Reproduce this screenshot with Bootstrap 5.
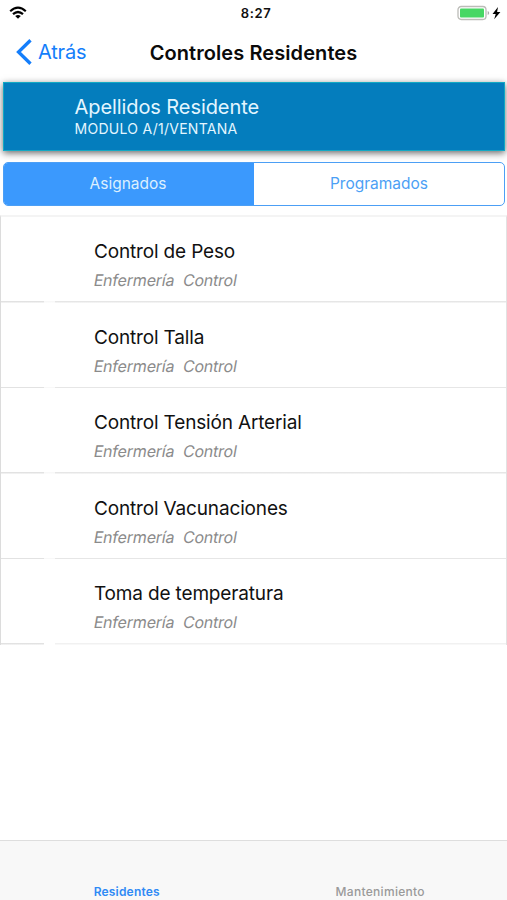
<!DOCTYPE html>
<html lang="es">
<head>
<meta charset="utf-8">
<meta name="viewport" content="width=device-width, initial-scale=1">
<title>Controles Residentes</title>
<link href="https://cdn.jsdelivr.net/npm/bootstrap@5.3.0/dist/css/bootstrap.min.css" rel="stylesheet">
<style>
body{font-family:Inter,"Liberation Sans",sans-serif;color:#111;background:#fff;height:900px;overflow:hidden}
.status-bar{height:26px;padding:0 6px 0 9px}
.side{flex:1 1 0}
.clock{font-size:13px;font-weight:600;line-height:26px;letter-spacing:.6px;padding-left:2px}
.nav-top{height:54px;padding:0 16px 1px}
.back-link{color:#147efb;font-size:20px;letter-spacing:-.2px;gap:5px;margin-top:2px}
.page-title{font-size:20px;font-weight:600;line-height:52px;letter-spacing:.08px;color:#0a0a0a}
.resident{height:69px;margin:2px 2px 0 3px;padding:11px 0 0 70.5px;background:#047dbd;border:1.5px solid #12a9c4;color:#e3f6ff;box-shadow:0 2px 7px 0 rgba(0,0,0,.6)}
.resident-name{font-size:20px;line-height:26px;letter-spacing:-.08px}
.resident-room{font-size:14px;line-height:18px;letter-spacing:.27px}
.segments{height:44px;margin:11px 2px 0 3px;border:1px solid #4c9ff5;border-radius:5px;overflow:hidden}
.segments .btn{border:0;border-radius:0;font-size:15.5px;padding:1px 0;color:#4c9ff5;line-height:40px}
.segments .btn.active{background:#3b99fd;color:#dcefff;padding-right:2px}
.controls{margin-top:9px;border-left:1.5px solid #dcdcdc;border-right:1px solid #e2e2e2;border-top:2px solid #f4f4f4}
.controls .list-group-item{height:85.5px;padding:22px 0 0 93px;border:0;color:#111;background:linear-gradient(90deg,#e2e2e2 43px,#f8f8f8 43px 54px,#e6e6e6 54px) 0 100%/100% 1.5px no-repeat #fff}
.controls .list-group-item:last-child{background:linear-gradient(90deg,#e2e2e2 43px,#fff 43px 54px,#f1f1f1 54px) 0 100%/100% 1.5px no-repeat #fff}
.control-name{font-size:19px;line-height:25px;letter-spacing:-.16px}
.control-kind{width:max-content;font-size:16px;line-height:20px;margin-top:6px;color:#8b8b8b;white-space:pre;letter-spacing:-.2px;transform:skewX(-10deg)}
.tabs{height:60px;background:#f8f8f8;border-top:1px solid #dedede;font-size:12px;font-weight:500;padding-top:42px;line-height:18px;color:#9a9a9a;letter-spacing:.3px}
.tabs .current{color:#2f8af5;font-weight:600;letter-spacing:.2px}
</style>
</head>
<body class="d-flex flex-column">
<div class="status-bar d-flex align-items-center">
  <div class="side d-flex">
    <svg width="18" height="14" viewBox="0 0 18 14" fill="none" stroke="#000" stroke-width="2.2"><path d="M1.2 5.2Q9-1.8 16.8 5.2M4 8.2Q9 3.8 14 8.2"/><path d="M9 12.8L6.2 10Q9 7.8 11.8 10Z" fill="#000" stroke="none"/></svg>
  </div>
  <div class="clock">8:27</div>
  <div class="side d-flex justify-content-end">
    <svg width="44" height="16" viewBox="0 0 44 16"><rect x="1" y="1.5" width="28" height="13" rx="3.2" fill="#fff" stroke="#bcbcb8" stroke-width="1.3"/><rect x="3" y="3.5" width="24" height="9" rx="1" fill="#47d764"/><path d="M30.7 6v4q1.5-.5 1.5-2t-1.5-2z" fill="#aaa"/><path d="M41 2L35.5 9h3.2l-1.5 5.2L43.4 7h-3.3z"/></svg>
  </div>
</div>
<nav class="nav-top d-flex align-items-center">
  <div class="side"><a class="back-link d-inline-flex align-items-center text-decoration-none" href="#"><svg width="17" height="26" viewBox="0 0 17 26" fill="none" stroke="#147efb" stroke-width="3.3"><path d="M14.5 1.2L2.5 13l12 11.8"/></svg>Atrás</a></div>
  <div class="page-title">Controles Residentes</div>
  <div class="side"></div>
</nav>
<header class="resident">
  <div class="resident-name">Apellidos Residente</div>
  <div class="resident-room">MODULO A/1/VENTANA</div>
</header>
<div class="segments d-flex">
  <button class="btn active w-50">Asignados</button>
  <button class="btn w-50">Programados</button>
</div>
<div class="controls list-group rounded-0">
  <div class="list-group-item"><div class="control-name">Control de Peso</div><div class="control-kind">Enfermería  Control</div></div>
  <div class="list-group-item"><div class="control-name">Control Talla</div><div class="control-kind">Enfermería  Control</div></div>
  <div class="list-group-item"><div class="control-name">Control Tensión Arterial</div><div class="control-kind">Enfermería  Control</div></div>
  <div class="list-group-item"><div class="control-name">Control Vacunaciones</div><div class="control-kind">Enfermería  Control</div></div>
  <div class="list-group-item"><div class="control-name">Toma de temperatura</div><div class="control-kind">Enfermería  Control</div></div>
</div>
<footer class="tabs d-flex mt-auto text-center">
  <div class="w-50 current">Residentes</div>
  <div class="w-50">Mantenimiento</div>
</footer>
<script src="https://cdn.jsdelivr.net/npm/bootstrap@5.3.0/dist/js/bootstrap.bundle.min.js"></script>
</body>
</html>
